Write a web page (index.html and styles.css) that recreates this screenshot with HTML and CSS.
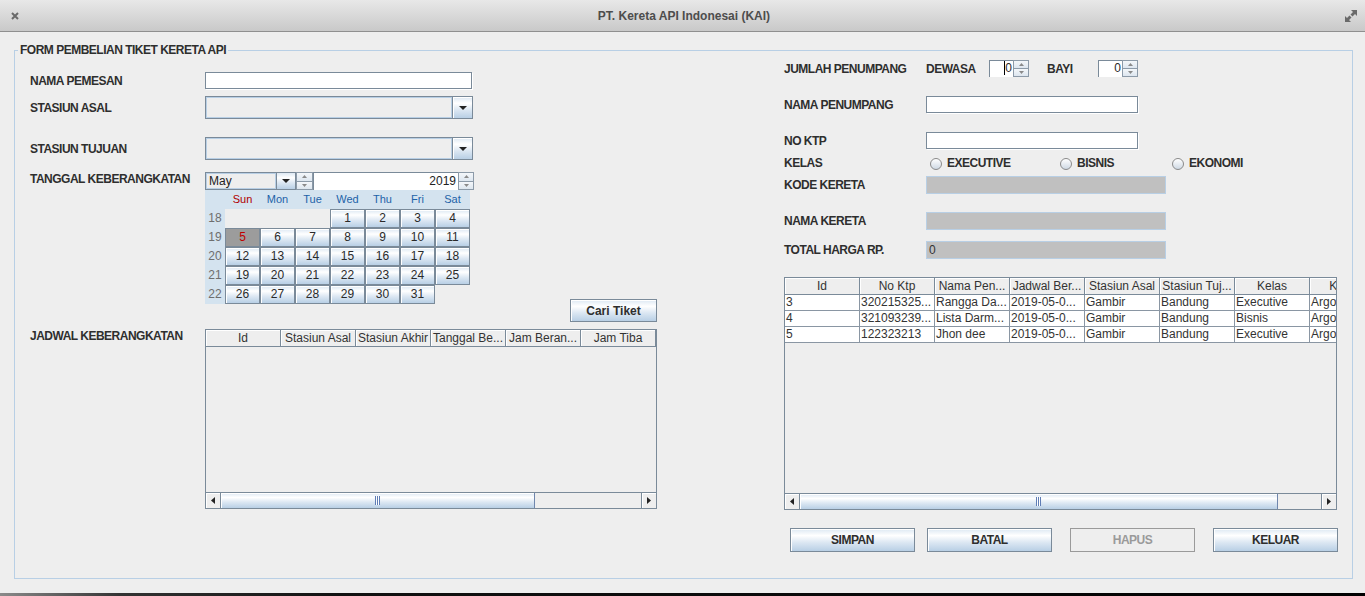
FILE: index.html
```html
<!DOCTYPE html>
<html>
<head>
<meta charset="utf-8">
<title>PT. Kereta API Indonesai (KAI)</title>
<link rel="stylesheet" href="styles.css">
</head>
<body>
<div class="titlebar">
  <svg class="tb-close" width="8" height="8" viewBox="0 0 8 8"><path d="M1 1 L7 7 M7 1 L1 7" stroke="#6a6a6a" stroke-width="2"/></svg>
  <span class="title">PT. Kereta API Indonesai (KAI)</span>
  <svg class="tb-max" width="12" height="12" viewBox="0 0 12 12"><polygon points="6,0 12,0 12,6 10,4 7.5,6.5 5.5,4.5 8,2" fill="#6a6a6a"/><polygon points="0,6 2,8 4.5,5.5 6.5,7.5 4,10 6,12 0,12" fill="#6a6a6a"/></svg>
</div>
<div class="main">
  <div class="fieldset">
    <div class="legend lbl">FORM PEMBELIAN TIKET KERETA API</div>
    <div class="cols">
      <div class="left">
        <div class="row r-h17">
          <span class="lbl lw-left">NAMA PEMESAN</span>
          <div class="text w267"></div>
        </div>
        <div class="row gap7">
          <span class="lbl lw-left">STASIUN ASAL</span>
          <div class="combo"><div class="combo-field"></div><div class="combo-btn"><svg width="8" height="4" viewBox="0 0 8 4"><polygon points="0,0 8,0 4,4" fill="#222"/></svg></div></div>
        </div>
        <div class="row gap18">
          <span class="lbl lw-left">STASIUN TUJUAN</span>
          <div class="combo"><div class="combo-field"></div><div class="combo-btn"><svg width="8" height="4" viewBox="0 0 8 4"><polygon points="0,0 8,0 4,4" fill="#222"/></svg></div></div>
        </div>
        <div class="row top gap12">
          <span class="lbl lw-left lbl-top">TANGGAL KEBERANGKATAN</span>
          <div class="cal">
            <div class="cal-top">
              <div class="mcombo"><span class="mfield">May</span><span class="mbtn"><svg width="8" height="4" viewBox="0 0 8 4"><polygon points="0,0 8,0 4,4" fill="#222"/></svg></span></div>
              <div class="spin w17"><span><svg width="5" height="3" viewBox="0 0 5 3"><polygon points="0,3 5,3 2.5,0" fill="#8a8a8a"/></svg></span><span><svg width="5" height="3" viewBox="0 0 5 3"><polygon points="0,0 5,0 2.5,3" fill="#8a8a8a"/></svg></span></div>
              <div class="yfield">2019</div>
              <div class="spin"><span><svg width="5" height="3" viewBox="0 0 5 3"><polygon points="0,3 5,3 2.5,0" fill="#8a8a8a"/></svg></span><span><svg width="5" height="3" viewBox="0 0 5 3"><polygon points="0,0 5,0 2.5,3" fill="#8a8a8a"/></svg></span></div>
            </div>
            <div class="cal-grid">
              <div class="wk"></div>
              <div class="dh sun">Sun</div><div class="dh">Mon</div><div class="dh">Tue</div><div class="dh">Wed</div><div class="dh">Thu</div><div class="dh">Fri</div><div class="dh">Sat</div>

              <div class="wk">18</div>
              <div class="empty"></div><div class="empty"></div><div class="empty"></div>
              <div class="day">1</div><div class="day">2</div><div class="day">3</div><div class="day">4</div>

              <div class="wk">19</div>
              <div class="day sel">5</div><div class="day">6</div><div class="day">7</div><div class="day">8</div><div class="day">9</div><div class="day">10</div><div class="day">11</div>

              <div class="wk">20</div>
              <div class="day">12</div><div class="day">13</div><div class="day">14</div><div class="day">15</div><div class="day">16</div><div class="day">17</div><div class="day">18</div>

              <div class="wk">21</div>
              <div class="day">19</div><div class="day">20</div><div class="day">21</div><div class="day">22</div><div class="day">23</div><div class="day">24</div><div class="day">25</div>

              <div class="wk">22</div>
              <div class="day">26</div><div class="day">27</div><div class="day">28</div><div class="day">29</div><div class="day">30</div><div class="day">31</div><div class="empty"></div>
            </div>
          </div>
        </div>
        <div class="row end gapm5">
          <div class="btn btn-cari">Cari Tiket</div>
        </div>
        <div class="row top gap7">
          <span class="lbl lw-left lbl-top">JADWAL KEBERANGKATAN</span>
          <div class="table tbl-left">
            <div class="thead">
              <div class="th">Id</div><div class="th">Stasiun Asal</div><div class="th">Stasiun Akhir</div><div class="th">Tanggal Be...</div><div class="th">Jam Beran...</div><div class="th">Jam Tiba</div>
            </div>
            <div class="viewport"></div>
            <div class="hscroll">
              <div class="sbtn"><svg width="4" height="7" viewBox="0 0 4 7"><polygon points="4,0 4,7 0,3.5" fill="#222"/></svg></div>
              <div class="thumb thumb-left"><span class="grip"></span></div>
              <div class="track"></div>
              <div class="sbtn sbtn-r"><svg width="4" height="7" viewBox="0 0 4 7"><polygon points="0,0 0,7 4,3.5" fill="#222"/></svg></div>
            </div>
          </div>
        </div>
      </div>

      <div class="right">
        <div class="row r-h17">
          <span class="lbl lw-right">JUMLAH PENUMPANG</span>
          <span class="lbl lw-dewasa">DEWASA</span>
          <div class="nspin">
            <div class="nfield"><span class="caret">0</span></div>
            <div class="spin h17"><span><svg width="5" height="3" viewBox="0 0 5 3"><polygon points="0,3 5,3 2.5,0" fill="#8a8a8a"/></svg></span><span><svg width="5" height="3" viewBox="0 0 5 3"><polygon points="0,0 5,0 2.5,3" fill="#8a8a8a"/></svg></span></div>
          </div>
          <span class="lbl lw-bayi">BAYI</span>
          <div class="nspin">
            <div class="nfield">0</div>
            <div class="spin h17"><span><svg width="5" height="3" viewBox="0 0 5 3"><polygon points="0,3 5,3 2.5,0" fill="#8a8a8a"/></svg></span><span><svg width="5" height="3" viewBox="0 0 5 3"><polygon points="0,0 5,0 2.5,3" fill="#8a8a8a"/></svg></span></div>
          </div>
        </div>
        <div class="row r-h17 gap19">
          <span class="lbl lw-right">NAMA PENUMPANG</span>
          <div class="text w212"></div>
        </div>
        <div class="row r-h17 gap19">
          <span class="lbl lw-right">NO KTP</span>
          <div class="text w212"></div>
        </div>
        <div class="row r-h16 gap6">
          <span class="lbl lw-right">KELAS</span>
          <div class="radio-item ri1"><span class="radio"></span><span class="lbl">EXECUTIVE</span></div>
          <div class="radio-item ri2"><span class="radio"></span><span class="lbl">BISNIS</span></div>
          <div class="radio-item"><span class="radio"></span><span class="lbl">EKONOMI</span></div>
        </div>
        <div class="row r-h18 gap5">
          <span class="lbl lw-right">KODE KERETA</span>
          <div class="dis"></div>
        </div>
        <div class="row r-h18 gap18">
          <span class="lbl lw-right">NAMA KERETA</span>
          <div class="dis"></div>
        </div>
        <div class="row r-h18 gap11">
          <span class="lbl lw-right">TOTAL HARGA RP.</span>
          <div class="dis">0</div>
        </div>
        <div class="row gap18">
          <div class="table tbl-right">
            <div class="clip">
              <div class="thead">
                <div class="th">Id</div><div class="th">No Ktp</div><div class="th">Nama Pen...</div><div class="th">Jadwal Ber...</div><div class="th">Stasiun Asal</div><div class="th">Stasiun Tuj...</div><div class="th">Kelas</div><div class="th">Kereta</div>
              </div>
              <div class="tr">
                <div class="td">3</div><div class="td">320215325...</div><div class="td">Rangga Da...</div><div class="td">2019-05-0...</div><div class="td">Gambir</div><div class="td">Bandung</div><div class="td">Executive</div><div class="td">Argo Parah...</div>
              </div>
              <div class="tr">
                <div class="td">4</div><div class="td">321093239...</div><div class="td">Lista Darm...</div><div class="td">2019-05-0...</div><div class="td">Gambir</div><div class="td">Bandung</div><div class="td">Bisnis</div><div class="td">Argo Wilis</div>
              </div>
              <div class="tr">
                <div class="td">5</div><div class="td">122323213</div><div class="td">Jhon dee</div><div class="td">2019-05-0...</div><div class="td">Gambir</div><div class="td">Bandung</div><div class="td">Executive</div><div class="td">Argo Parah...</div>
              </div>
              <div class="viewport vp-right"></div>
            </div>
            <div class="hscroll">
              <div class="sbtn"><svg width="4" height="7" viewBox="0 0 4 7"><polygon points="4,0 4,7 0,3.5" fill="#222"/></svg></div>
              <div class="thumb thumb-right"><span class="grip"></span></div>
              <div class="track"></div>
              <div class="sbtn sbtn-r"><svg width="4" height="7" viewBox="0 0 4 7"><polygon points="0,0 0,7 4,3.5" fill="#222"/></svg></div>
            </div>
          </div>
        </div>
        <div class="row gap18 btnrow">
          <div class="btn bbtn b1 lbl">SIMPAN</div>
          <div class="btn bbtn b2 lbl">BATAL</div>
          <div class="btn bbtn b3 lbl disabled">HAPUS</div>
          <div class="btn bbtn b3 lbl">KELUAR</div>
        </div>
      </div>
    </div>
  </div>
</div>
<div class="bottomstrip"></div>
</body>
</html>
```

FILE: styles.css
```css
* { box-sizing: border-box; }
html, body { margin: 0; padding: 0; }
body {
  width: 1365px;
  height: 596px;
  overflow: hidden;
  background: #eeeeee;
  font-family: "Liberation Sans", Arial, sans-serif;
  font-size: 12px;
  color: #333;
}

/* title bar */
.titlebar {
  height: 32px;
  border-bottom: 1px solid #8f8f8f;
  background: linear-gradient(#e8e8e8, #c9c9c9);
  display: grid;
  grid-template-columns: 1fr auto 1fr;
  align-items: center;
  padding: 0 8px 0 11px;
}
.tb-close { justify-self: start; }
.tb-max { justify-self: end; }
.title { font-weight: bold; font-size: 12px; color: #4d4d4d; }

.main {
  height: 561px;
  padding: 18px 12px 14px 14px;
}
.fieldset {
  position: relative;
  height: 529px;
  border: 1px solid #b8cfe5;
}
.legend {
  position: absolute;
  left: 3px;
  top: -8px;
  padding: 0 2px;
  background: #eeeeee;
}

.lbl {
  font-weight: bold;
  font-size: 12px;
  letter-spacing: -0.5px;
  line-height: 14px;
  color: #2e2e2e;
  white-space: nowrap;
}

.cols { display: flex; align-items: flex-start; }
.left { margin-left: 15px; width: 627px; padding-top: 21px; display: flex; flex-direction: column; }
.right { margin-left: 127px; width: 554px; padding-top: 9px; display: flex; flex-direction: column; }

.row { display: flex; align-items: center; }
.row.top { align-items: flex-start; }
.row.end { justify-content: flex-end; }
.r-h16 { height: 16px; }
.r-h17 { height: 17px; }
.r-h18 { height: 18px; }
.gap5 { margin-top: 5px; }
.gap6 { margin-top: 6px; }
.gap7 { margin-top: 7px; }
.gap11 { margin-top: 11px; }
.gap12 { margin-top: 12px; }
.gap18 { margin-top: 18px; }
.gap19 { margin-top: 19px; }
.gapm5 { margin-top: -5px; }

.lw-left { width: 175px; flex-shrink: 0; }
.lbl-top { margin-top: 0; }
.lw-right { width: 142px; flex-shrink: 0; }
.lw-dewasa { width: 63px; flex-shrink: 0; }
.lw-bayi { width: 51px; margin-left: 18px; flex-shrink: 0; }

/* text fields */
.text {
  height: 17px;
  background: #fff;
  border: 1px solid #7a8a99;
  box-shadow: 1px 1px 0 #fff;
}
.w267 { width: 267px; }
.w212 { width: 212px; }

/* combo box */
.combo {
  display: flex;
  width: 268px;
  height: 23px;
  border: 1px solid #7a8a99;
}
.combo-field {
  flex: 1;
  background: #eeeeee;
  box-shadow: inset 0 0 0 1px #b8cfe5;
}
.combo-btn {
  width: 20px;
  border-left: 1px solid #7a8a99;
  background: linear-gradient(#dde8f3 0%, #ffffff 30%, #dde8f3 60%, #b8cfe5 100%);
  box-shadow: inset 1px 1px 0 #fff;
  display: flex;
  align-items: center;
  justify-content: center;
}

/* buttons */
.btn {
  display: flex;
  align-items: center;
  justify-content: center;
  border: 1px solid #7a8a99;
  background: linear-gradient(#dde8f3 0%, #ffffff 30%, #dde8f3 60%, #b8cfe5 100%);
  box-shadow: inset 1px 1px 0 #fff;
  font-weight: bold;
  color: #2e2e2e;
}
.btn-cari { width: 87px; height: 23px; }
.bbtn { width: 125px; height: 24px; }
.btnrow .b1 { margin-left: 6px; }
.btnrow .b2 { margin-left: 12px; }
.btnrow .b3 { margin-left: 18px; }
.btn.disabled {
  background: #eeeeee;
  border-color: #9a9a9a;
  box-shadow: none;
  color: #9a9a9a;
}

/* calendar */
.cal { width: 269px; }
.cal-top { display: flex; height: 18px; }
.mcombo {
  display: flex;
  width: 91px;
  border: 1px solid #7a8a99;
}
.mfield {
  flex: 1;
  background: #eeeeee;
  box-shadow: inset 0 0 0 1px #b8cfe5;
  padding-left: 3px;
  line-height: 16px;
  color: #222;
}
.mbtn {
  width: 19px;
  border-left: 1px solid #7a8a99;
  background: linear-gradient(#dde8f3 0%, #ffffff 30%, #dde8f3 60%, #b8cfe5 100%);
  display: flex;
  align-items: center;
  justify-content: center;
}
.spin {
  width: 16px;
  display: flex;
  flex-direction: column;
}
.spin.w17 { width: 17px; }
.spin span {
  flex: 1;
  border: 1px solid #8c9aa8;
  background: linear-gradient(#f4f7fa, #dde6ef);
  display: flex;
  align-items: center;
  justify-content: center;
}
.spin span + span { border-top: none; }
.yfield {
  width: 145px;
  background: #fff;
  border-top: 1px solid #7a8a99;
  border-left: 1px solid #7a8a99;
  text-align: right;
  padding-right: 2px;
  line-height: 16px;
  color: #222;
}

.cal-grid {
  display: grid;
  grid-template-columns: 20px repeat(7, 35px);
  grid-auto-rows: 19px;
}
.wk {
  background: #d4e3ef;
  color: #6e6e6e;
  text-align: center;
  line-height: 19px;
}
.dh {
  background: #d4e3ef;
  color: #1d62a8;
  font-size: 11px;
  text-align: center;
  line-height: 19px;
}
.dh.sun { color: #b00000; }
.empty { background: #eeeeee; }
.day {
  border: 1px solid #7a8a99;
  background: linear-gradient(#dde8f3 0%, #ffffff 30%, #dde8f3 60%, #b8cfe5 100%);
  box-shadow: inset 1px 1px 0 #fff;
  text-align: center;
  line-height: 17px;
  color: #2a2a2a;
}
.day.sel {
  background: #9c9c9c;
  box-shadow: none;
  color: #c00000;
}

/* tables */
.table {
  border: 1px solid #7a8a99;
  display: flex;
  flex-direction: column;
  background: #eeeeee;
}
.tbl-left { width: 452px; height: 180px; }
.tbl-right { width: 553px; height: 233px; }
.clip { flex: 1; overflow: hidden; display: flex; flex-direction: column; }
.thead { display: flex; height: 17px; flex-shrink: 0; }
.th {
  width: 75px;
  flex-shrink: 0;
  height: 17px;
  border-right: 1px solid #7a8a99;
  border-bottom: 1px solid #7a8a99;
  box-shadow: inset 1px 1px 0 #fff;
  background: #eeeeee;
  text-align: center;
  line-height: 16px;
  white-space: nowrap;
  overflow: hidden;
  color: #333;
}
.tr { display: flex; height: 16px; flex-shrink: 0; }
.td {
  width: 75px;
  flex-shrink: 0;
  height: 16px;
  background: #fff;
  border-right: 1px solid #8a96a3;
  border-bottom: 1px solid #8a96a3;
  padding-left: 1px;
  line-height: 15px;
  white-space: nowrap;
  overflow: hidden;
  color: #333;
}
.viewport { flex: 1; background: #eeeeee; }

.hscroll {
  display: flex;
  height: 16px;
  flex-shrink: 0;
  border-top: 1px solid #7a8a99;
  background: #eeeeee;
}
.sbtn {
  width: 15px;
  flex-shrink: 0;
  border-right: 1px solid #7a8a99;
  box-shadow: inset 1px 1px 0 #fff;
  display: flex;
  align-items: center;
  justify-content: center;
}
.sbtn-r { border-right: none; border-left: 1px solid #7a8a99; }
.thumb {
  flex-shrink: 0;
  border-right: 1px solid #6f86ad;
  background: linear-gradient(#dde8f3 0%, #ffffff 30%, #dde8f3 60%, #b8cfe5 100%);
  box-shadow: inset 1px 1px 0 #fff;
  display: flex;
  align-items: center;
  justify-content: center;
}
.thumb-left { width: 314px; }
.thumb-right { width: 478px; }
.grip {
  width: 5px;
  height: 9px;
  background: repeating-linear-gradient(to right, #5f7db5 0 1px, #ffffff 1px 2px);
}
.track { flex: 1; }

/* number spinner */
.nspin { display: flex; width: 40px; height: 17px; }
.nfield {
  width: 24px;
  background: #fff;
  border-top: 1px solid #7a8a99;
  border-left: 1px solid #7a8a99;
  text-align: right;
  padding-right: 1px;
  line-height: 15px;
  color: #2a2a2a;
}
.caret { border-left: 1px solid #000; }
.spin.h17 { height: 17px; }

/* radios */
.radio-item { display: flex; align-items: center; gap: 5px; }
.ri1 { margin-left: 4px; width: 130px; }
.ri2 { width: 112px; }
.radio {
  width: 12px;
  height: 12px;
  border-radius: 50%;
  border: 1px solid #8a8a8a;
  background: linear-gradient(#ffffff, #cfd9e4);
  margin-top: 2px;
}

/* disabled field */
.dis {
  width: 240px;
  height: 18px;
  background: #c0c0c0;
  border: 1px solid #b8cfe5;
  padding-left: 2px;
  line-height: 16px;
  color: #333;
}

.bottomstrip {
  height: 3px;
  background: linear-gradient(to right, #8a8a8a 0px, #333 120px, #111 340px, #000 100%);
}
```
